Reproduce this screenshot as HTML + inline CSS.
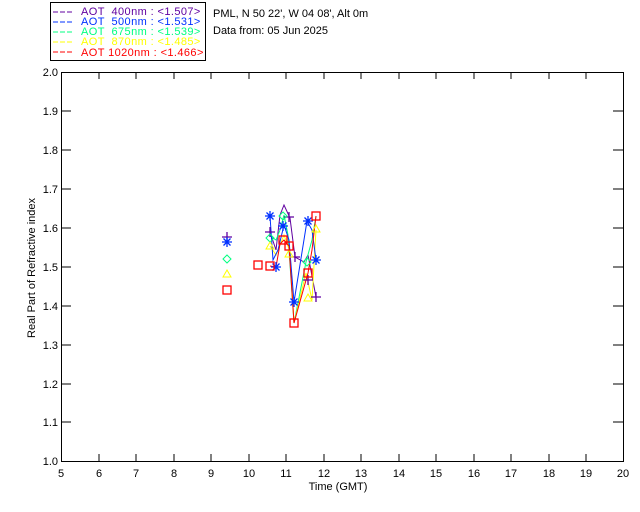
<!DOCTYPE html>
<html><head><meta charset="utf-8"><style>
html,body{margin:0;padding:0;background:#fff;}
svg{display:block;}
text{font-family:"Liberation Sans",sans-serif;font-size:11px;}
</style></head><body>
<svg width="640" height="512" viewBox="0 0 640 512" xmlns="http://www.w3.org/2000/svg">
<defs>
<g id="plus"><path d="M-5 0H5M0 -5V5" stroke-width="1.3"/></g>
<g id="star"><path d="M-5 0H5M0 -5V5M-3.5 -3.5L3.5 3.5M-3.5 3.5L3.5 -3.5" stroke-width="1.3"/></g>
<g id="dia"><path d="M0 -4L4 0L0 4L-4 0Z" fill="none" stroke-width="1"/></g>
<g id="tri"><path d="M0 -4L4 3H-4Z" fill="none" stroke-width="1"/></g>
<g id="sq"><rect x="-4" y="-4" width="8" height="8" fill="none" stroke-width="1.3"/></g>
</defs>
<rect x="50.5" y="2.5" width="155" height="58" fill="none" stroke="#000"/>
<g font-size="11.5" letter-spacing="0.4">
<line x1="53" y1="12" x2="73" y2="12" stroke="#6000a0" stroke-dasharray="5,2"/>
<text x="81" y="15" fill="#6000a0" xml:space="preserve">AOT  400nm : &lt;1.507&gt;</text>
<line x1="53" y1="22" x2="73" y2="22" stroke="#0030ff" stroke-dasharray="5,2"/>
<text x="81" y="25" fill="#0030ff" xml:space="preserve">AOT  500nm : &lt;1.531&gt;</text>
<line x1="53" y1="32" x2="73" y2="32" stroke="#00ff80" stroke-dasharray="5,2"/>
<text x="81" y="35" fill="#00ff80" xml:space="preserve">AOT  675nm : &lt;1.539&gt;</text>
<line x1="53" y1="42" x2="73" y2="42" stroke="#ffff00" stroke-dasharray="5,2"/>
<text x="81" y="45" fill="#ffff00" xml:space="preserve">AOT  870nm : &lt;1.485&gt;</text>
<line x1="53" y1="52" x2="73" y2="52" stroke="#ff0000" stroke-dasharray="5,2"/>
<text x="81" y="56" fill="#ff0000" xml:space="preserve">AOT 1020nm : &lt;1.466&gt;</text>
</g>
<text x="213" y="17">PML, N 50 22', W 04 08', Alt 0m</text>
<text x="213" y="34">Data from: 05 Jun 2025</text>
<rect x="61.5" y="72.5" width="562" height="389" fill="none" stroke="#000"/>
<g stroke="#000">
<path d="M99 461v-7M136 461v-7M174 461v-7M211 461v-7M249 461v-7M286 461v-7M324 461v-7M361 461v-7M399 461v-7M436 461v-7M474 461v-7M511 461v-7M549 461v-7M586 461v-7"/>
<path d="M99 72v7M136 72v7M174 72v7M211 72v7M249 72v7M286 72v7M324 72v7M361 72v7M399 72v7M436 72v7M474 72v7M511 72v7M549 72v7M586 72v7"/>
<path d="M61 111h10M61 150h10M61 189h10M61 228h10M61 267h10M61 306h10M61 345h10M61 384h10M61 422h10"/>
<path d="M623 111h-10M623 150h-10M623 189h-10M623 228h-10M623 267h-10M623 306h-10M623 345h-10M623 384h-10M623 422h-10"/>
</g>
<g font-size="10" text-anchor="end">
<text x="58" y="76">2.0</text><text x="58" y="115">1.9</text><text x="58" y="154">1.8</text><text x="58" y="193">1.7</text><text x="58" y="232">1.6</text><text x="58" y="271">1.5</text><text x="58" y="310">1.4</text><text x="58" y="349">1.3</text><text x="58" y="388">1.2</text><text x="58" y="426">1.1</text><text x="58" y="465">1.0</text>
</g>
<g font-size="10" text-anchor="middle">
<text x="61" y="477">5</text><text x="99" y="477">6</text><text x="136" y="477">7</text><text x="174" y="477">8</text><text x="211" y="477">9</text><text x="249" y="477">10</text><text x="286" y="477">11</text><text x="324" y="477">12</text><text x="361" y="477">13</text><text x="399" y="477">14</text><text x="436" y="477">15</text><text x="474" y="477">16</text><text x="511" y="477">17</text><text x="549" y="477">18</text><text x="586" y="477">19</text><text x="623" y="477">20</text>
<text x="338" y="490">Time (GMT)</text>
</g>
<text font-size="10" transform="translate(35,268) rotate(-90)" text-anchor="middle">Real Part of Refractive index</text>
<polyline fill="none" stroke="#6000a0" points="270,232 276,250 280,215 284,205 290,218 295,257 304,262 308,255 316,297"/>
<polyline fill="none" stroke="#00ff80" points="270,236 276,240 280,230 284,215 288,235 294,323 306,262 312,240 316,216"/>
<polyline fill="none" stroke="#ffff00" points="270,246 276,255 280,245 284,235 290,252 294,323 306,273 312,300 316,230"/>
<polyline fill="none" stroke="#0030ff" points="270,216 273,260 278,250 284,225 289,240 294,302 307,221 312,230 316,260"/>
<polyline fill="none" stroke="#ff0000" points="270,266 276,267 280,244 284,240 289,246 294,323 308,273 312,250 316,216"/>
<g stroke="#6000a0"><use href="#plus" x="227" y="237"/><use href="#plus" x="270" y="232"/><use href="#plus" x="289" y="217"/><use href="#plus" x="295" y="257"/><use href="#plus" x="308" y="280"/><use href="#plus" x="316" y="297"/></g>
<g stroke="#0030ff"><use href="#star" x="227" y="242"/><use href="#star" x="270" y="216"/><use href="#star" x="283" y="226"/><use href="#star" x="294" y="302"/><use href="#star" x="308" y="221"/><use href="#star" x="316" y="260"/><use href="#star" x="276" y="267"/></g>
<g stroke="#00ff80"><use href="#dia" x="227" y="259"/><use href="#dia" x="283" y="216"/><use href="#dia" x="270" y="238"/><use href="#dia" x="307" y="262"/></g>
<g stroke="#ffff00"><use href="#tri" x="227" y="274"/><use href="#tri" x="270" y="246"/><use href="#tri" x="289" y="254"/><use href="#tri" x="308" y="298"/><use href="#tri" x="316" y="229"/></g>
<g stroke="#ff0000"><use href="#sq" x="227" y="290"/><use href="#sq" x="258" y="265"/><use href="#sq" x="270" y="266"/><use href="#sq" x="283" y="240"/><use href="#sq" x="289" y="246"/><use href="#sq" x="294" y="323"/><use href="#sq" x="308" y="273"/><use href="#sq" x="316" y="216"/></g>
</svg>
</body></html>
